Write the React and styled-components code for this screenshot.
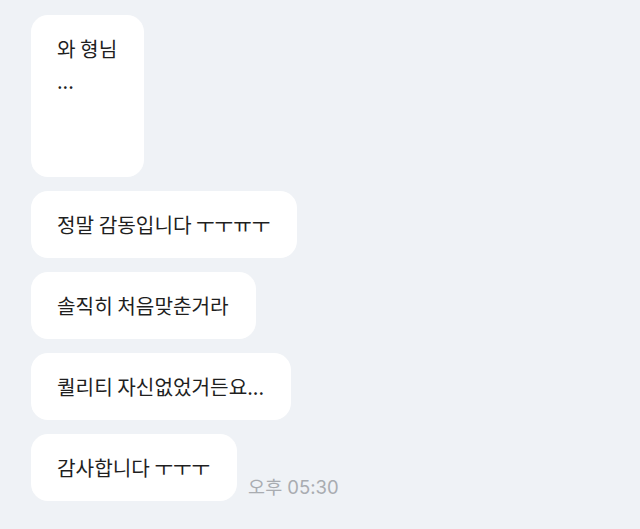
import styled, { createGlobalStyle } from 'styled-components';
import React from 'react';

const Global = createGlobalStyle`
  html, body {
    margin: 0;
    padding: 0;
    background: #eff2f6;
  }
  body {
    font-family: "Noto Sans CJK KR", "Noto Sans", sans-serif;
  }
`;

const Chat = styled.div`
  display: flex;
  flex-direction: column;
  align-items: flex-start;
  gap: 13.5px;
  padding: 15px 31px;
  min-height: 529px;
  box-sizing: border-box;
  background: #eff2f6;
`;

const Row = styled.div`
  display: flex;
  align-items: flex-end;
  gap: 11px;
`;

const Bubble = styled.div`
  background: #ffffff;
  border-radius: 17px;
  padding: 18px 27px 18px 26px;
  font-size: 20.2px;
  line-height: 31.5px;
  color: #1f1f1f;
  white-space: pre-wrap;
`;

const Time = styled.span`
  font-family: Inter, "Noto Sans CJK KR", sans-serif;
  font-size: 18.5px;
  line-height: 22px;
  color: #a9acb1;
  margin-bottom: 3px;
  white-space: nowrap;
`;

const messages = [
  '와 형님\n...\n\n\u200b',
  '정말 감동입니다 ㅜㅜㅠㅜ',
  '솔직히 처음맞춘거라',
  '퀄리티 자신없었거든요...',
];

const App = () => {
  return (
    <>
      <Global />
      <Chat>
        {messages.map((text, i) => (
          <Bubble key={i}>{text}</Bubble>
        ))}
        <Row>
          <Bubble>감사합니다 ㅜㅜㅜ</Bubble>
          <Time>오후 05:30</Time>
        </Row>
      </Chat>
    </>
  );
};

export default App;
